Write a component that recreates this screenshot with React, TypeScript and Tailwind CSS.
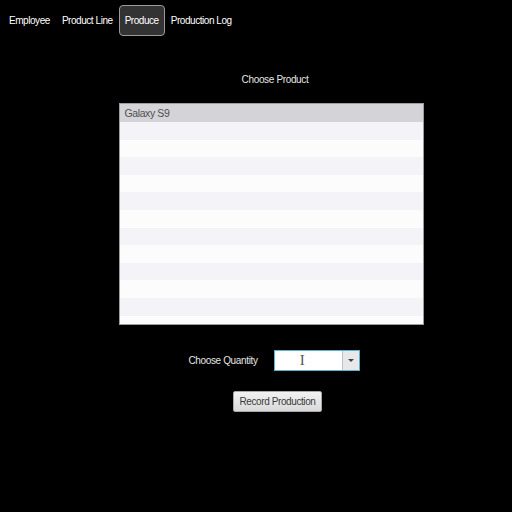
import { useState } from 'react'

// Tabs across the top; the active one gets the rounded dark box
const tabs = ['Employee', 'Product Line', 'Produce', 'Production Log']

const rows = Array.from({ length: 12 }, (_, i) => i)

export default function App() {
  const [active, setActive] = useState('Produce')

  return (
    <div
      className="w-[512px] h-[512px] bg-black text-[10px] text-[#e6e6e6] overflow-hidden"
      style={{ fontFamily: '"Liberation Sans", Arial, sans-serif' }}
    >
      {/* ── Tab bar ─────────────────────────────────────────── */}
      <div className="flex items-center pl-[3px] pt-[5px] h-[36px]">
        {tabs.map((tab) => (
          <button
            key={tab}
            onClick={() => setActive(tab)}
            className={
              tab === active
                ? 'h-[31px] px-[5px] rounded-[4px] border border-[#9a9a9a] bg-[#333333] text-white tracking-[-0.45px]'
                : 'h-[31px] px-[5px] border border-transparent text-white tracking-[-0.45px]'
            }
          >
            {tab}
          </button>
        ))}
      </div>

      {/* ── Produce form ───────────────────────────────────── */}
      <div className="flex flex-col items-center pl-[30px]">
        <div className="mt-[37px] leading-[14px] tracking-[-0.35px] ml-[8px]">Choose Product</div>

        <div className="mt-[16px] w-[305px] h-[222px] border border-[#9c9c9c] bg-[#fcfcfd] flex flex-col overflow-hidden">
          <div className="h-[18px] shrink-0 bg-[#d3d3d8] px-[5px] leading-[18px] text-[#505050] text-[10.5px] tracking-[-0.4px]">
            Galaxy S9
          </div>
          {rows.map((i) => (
            <div
              key={i}
              className={i % 2 === 0 ? 'h-[17.6px] shrink-0 bg-[#f4f4f8]' : 'h-[17.6px] shrink-0 bg-[#fcfcfd]'}
            />
          ))}
        </div>

        <div className="mt-[25px] flex items-center gap-[16px] ml-[6px]">
          <span className="tracking-[-0.35px]">Choose Quantity</span>
          <div className="flex h-[21px] w-[86px] border border-[#5bb4cf] bg-white">
            <div className="flex-1 flex items-center justify-center pr-[12px]">
              <span
                className="text-[#555] text-[15px] leading-none"
                style={{ fontFamily: '"Liberation Serif", serif' }}
              >
                I
              </span>
            </div>
            <div className="w-[17px] border-l border-[#b8c4c8] bg-[#e8e8ea] flex items-center justify-center">
              <span className="w-0 h-0 border-l-[3px] border-r-[3px] border-t-[3px] border-l-transparent border-r-transparent border-t-[#444]" />
            </div>
          </div>
        </div>

        <button className="mt-[20px] h-[21px] px-[5px] ml-[13px] rounded-[2px] border border-[#a8a8a8] bg-gradient-to-b from-[#f2f2f2] to-[#d9d9d9] text-[#3a3a3a] tracking-[-0.4px]">
          Record Production
        </button>
      </div>
    </div>
  )
}
